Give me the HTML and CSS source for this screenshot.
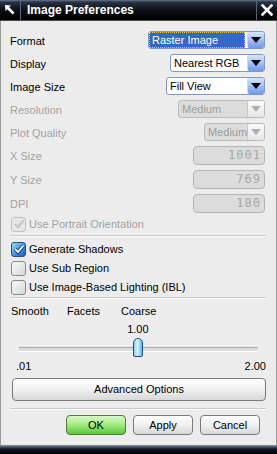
FILE: index.html
```html
<!DOCTYPE html>
<html lang="en">
<head>
  <meta charset="UTF-8">
  <title>Image Preferences</title>
  <link rel="stylesheet" href="styles.css">
</head>
<body>
<div class="window">
  <div class="titlebar">
    <div class="tb-icon">
      <svg width="12" height="12" viewBox="0 0 12 12"><path d="M1 1 L7 1.5 L5.2 3.3 L10.5 8.6 L8.6 10.5 L3.3 5.2 L1.5 7 Z" fill="#fff"/></svg>
    </div>
    <div class="tb-title">Image Preferences</div>
    <div class="tb-close">
      <svg width="12" height="12" viewBox="0 0 12 12"><path d="M1.5 1.5 L10.5 10.5 M10.5 1.5 L1.5 10.5" stroke="#fff" stroke-width="2.6" stroke-linecap="square"/></svg>
    </div>
  </div>

  <div class="content">
    <div class="row">
      <span class="label">Format</span>
      <div class="select sel-format">
        <span class="field focus">Raster Image</span>
        <span class="arrow"><i></i></span>
      </div>
    </div>
    <div class="row">
      <span class="label">Display</span>
      <div class="select sel-display">
        <span class="field">Nearest RGB</span>
        <span class="arrow"><i></i></span>
      </div>
    </div>
    <div class="row">
      <span class="label">Image Size</span>
      <div class="select sel-size">
        <span class="field">Fill View</span>
        <span class="arrow"><i></i></span>
      </div>
    </div>
    <div class="row">
      <span class="label off">Resolution</span>
      <div class="select sel-res disabled">
        <span class="field">Medium</span>
        <span class="arrow"><i></i></span>
      </div>
    </div>
    <div class="row">
      <span class="label off">Plot Quality</span>
      <div class="select sel-plot disabled">
        <span class="field">Medium</span>
        <span class="arrow"><i></i></span>
      </div>
    </div>
    <div class="row tall">
      <span class="label off">X Size</span>
      <span class="num">1001</span>
    </div>
    <div class="row tall">
      <span class="label off">Y Size</span>
      <span class="num">769</span>
    </div>
    <div class="row tall">
      <span class="label off">DPI</span>
      <span class="num">180</span>
    </div>

    <div class="check first off">
      <span class="box checked-off"><svg width="12" height="12" viewBox="0 0 12 12"><path d="M2 6 L5 9 L10.5 2.5" fill="none" stroke="#c4c4c4" stroke-width="2.4"/></svg></span>
      Use Portrait Orientation
    </div>
    <div class="sep sep-a"></div>
    <div class="check">
      <span class="box checked"><svg width="12" height="12" viewBox="0 0 12 12"><path d="M2 6 L5 9 L10.5 2.5" fill="none" stroke="#1b2f66" stroke-width="3.4"/><path d="M2 6 L5 9 L10.5 2.5" fill="none" stroke="#fff" stroke-width="1.8"/></svg></span>
      Generate Shadows
    </div>
    <div class="check">
      <span class="box"></span>
      Use Sub Region
    </div>
    <div class="check">
      <span class="box"></span>
      Use Image-Based Lighting (IBL)
    </div>
    <div class="sep sep-b"></div>

    <div class="modes">
      <span class="m-smooth">Smooth</span>
      <span class="m-facets">Facets</span>
      <span>Coarse</span>
    </div>
    <div class="slider">
      <div class="slider-value"><span style="left: 49.75%">1.00</span></div>
      <div class="track">
        <span class="thumb" style="left: 49.75%"></span>
      </div>
    </div>
    <div class="range">
      <span>.01</span>
      <span>2.00</span>
    </div>

    <div class="btn wide">Advanced Options</div>
    <div class="sep sep-c"></div>
    <div class="actions">
      <div class="btn ok">OK</div>
      <div class="btn">Apply</div>
      <div class="btn">Cancel</div>
    </div>
  </div>

  <div class="bottombar"></div>
</div>
</body>
</html>
```

FILE: styles.css
```css
body {
  margin: 0;
  font-family: "Liberation Sans", Arial, sans-serif;
  font-size: 11px;
  color: #000;
}
.window {
  width: 277px;
  height: 454px;
  display: flex;
  flex-direction: column;
  background: #ececec;
  box-sizing: border-box;
  border-left: 1px solid #9a9a9a;
  border-right: 1px solid #9a9a9a;
}

/* title bar */
.titlebar {
  height: 20px;
  display: flex;
  align-items: stretch;
  background: linear-gradient(#6b7890 0, #2a3344 2px, #0c1019 10px, #000 100%);
  border-bottom: 1px solid #4a4a4a;
  margin: 0 -1px;
  color: #fff;
}
.tb-icon {
  width: 20px;
  display: flex;
  align-items: center;
  justify-content: center;
  border-right: 1px solid #5b6478;
}
.tb-title {
  flex: 1;
  padding-left: 6px;
  font-weight: bold;
  font-size: 12px;
  line-height: 20px;
}
.tb-close {
  width: 20px;
  display: flex;
  align-items: center;
  justify-content: center;
  border-left: 1px solid #5b6478;
}

.content {
  flex: 1;
  padding: 10px 10px 0 9px;
  display: flex;
  flex-direction: column;
}

/* labelled rows */
.row {
  height: 18px;
  margin-bottom: 5px;
  display: flex;
  align-items: center;
  justify-content: space-between;
}
.row.tall { height: 19px; }
.label { padding-top: 1px; }
.off { color: #a3a3a3; }

.select {
  height: 18px;
  box-sizing: border-box;
  border: 1px solid #7d98c4;
  border-radius: 3px;
  background: #fff;
  display: flex;
  margin-right: 1px;
}
.sel-format { width: 117px; }
.sel-display { width: 95px; }
.sel-size { width: 99px; }
.sel-res { width: 87px; }
.sel-plot { width: 61px; }
.field {
  flex: 1;
  padding-left: 3px;
  line-height: 16px;
  white-space: nowrap;
  overflow: hidden;
}
.field.focus {
  background: #3169c6;
  color: #fff;
  border: 1px dotted #e8c050;
  margin: 0 2px 0 0;
  line-height: 14px;
  padding-left: 2px;
}
.arrow {
  width: 16px;
  border-radius: 2px;
  background: linear-gradient(#d8e6fc, #a9c4f4 45%, #6f99ea);
  border-left: 1px solid #c7d7f5;
  display: flex;
  align-items: center;
  justify-content: center;
}
.arrow i {
  width: 0;
  height: 0;
  border-left: 5px solid transparent;
  border-right: 5px solid transparent;
  border-top: 6px solid #000;
}
.select.disabled {
  border-color: #bababa;
  background: #dcdcdc;
  color: #9d9d9d;
}
.select.disabled .arrow {
  background: linear-gradient(#fbfbfb, #e6e6e6);
  border-left-color: #c4c4c4;
}
.select.disabled .arrow i { border-top-color: #b0b0b0; }

.num {
  width: 72px;
  height: 19px;
  box-sizing: border-box;
  border: 1px solid #b4b4b4;
  border-radius: 4px;
  background: #dcdcdc;
  color: #a9a9a0;
  font-family: "DejaVu Sans Mono", monospace;
  font-size: 12px;
  letter-spacing: 1px;
  text-align: right;
  padding-right: 3px;
  line-height: 17px;
  margin-right: 1px;
}

/* check boxes */
.check {
  height: 14px;
  margin-bottom: 5px;
  display: flex;
  align-items: center;
  padding-left: 1px;
}
.check.first { margin-top: -1px; margin-bottom: 4px; }
.box {
  width: 13px;
  height: 13px;
  margin-right: 3px;
  border: 1px solid #8a8a8a;
  border-radius: 3px;
  background: linear-gradient(135deg, #fafafa, #d6d6d6);
  display: flex;
  align-items: center;
  justify-content: center;
}
.box.checked {
  border-color: #2c4d86;
  background: linear-gradient(135deg, #9fe0fb, #3b8fe4 55%, #1f5fc4);
}
.box.checked-off {
  border-color: #c2c2c2;
  background: #e6e6e6;
}

.sep {
  height: 1px;
  background: #c8c8c8;
  border-bottom: 1px solid #fbfbfb;
  margin-right: -1px;
}
.sep-a { margin: 0 0 5px; }
.sep-b { margin: -2px 0 5px; }
.sep-c { margin: 7px 0 5px; }

/* slider */
.modes {
  display: flex;
  height: 14px;
  line-height: 14px;
  padding-left: 1px;
}
.m-smooth { width: 56px; }
.m-facets { width: 54px; }
.slider {
  margin: 0 8px 0 9px;
}
.slider-value {
  height: 14px;
  margin-top: 4px;
  line-height: 14px;
}
.slider-value span {
  position: relative;
  display: inline-block;
  transform: translateX(-50%);
}
.track {
  position: relative;
  height: 3px;
  margin: 11px 0 10px;
  border-top: 1px solid #a8a8a8;
  background: #dcdcdc;
  border-bottom: 1px solid #fff;
}
.thumb {
  position: absolute;
  top: -10px;
  width: 8px;
  height: 17px;
  margin-left: -5px;
  border: 1px solid #1e4c8c;
  border-radius: 5px 5px 2px 2px;
  background: linear-gradient(90deg, #8fd0f6, #d8f3ff 45%, #5db6ef);
}
.range {
  display: flex;
  justify-content: space-between;
  padding-left: 6px;
  height: 14px;
  line-height: 14px;
  margin-top: -3px;
}

/* buttons */
.btn {
  height: 20px;
  box-sizing: border-box;
  border: 1px solid #7a7a7a;
  border-radius: 4px;
  background: linear-gradient(#ffffff, #f2f2f2 45%, #d8d8d8);
  text-align: center;
  line-height: 18px;
}
.btn.wide {
  height: 23px;
  line-height: 21px;
  margin: 5px 0 0 2px;
}
.actions {
  display: flex;
  justify-content: flex-end;
  gap: 7px;
  padding-right: 6px;
}
.actions .btn { width: 60px; }
.btn.ok {
  border-color: #4f7d3c;
  background: linear-gradient(#d8f8c8, #a8ec88 45%, #58c838);
}

.bottombar {
  height: 9px;
  margin: 0 -1px;
  background: linear-gradient(#8c96a8 0, #485468 2px, #121826 4px, #000 100%);
}
```
